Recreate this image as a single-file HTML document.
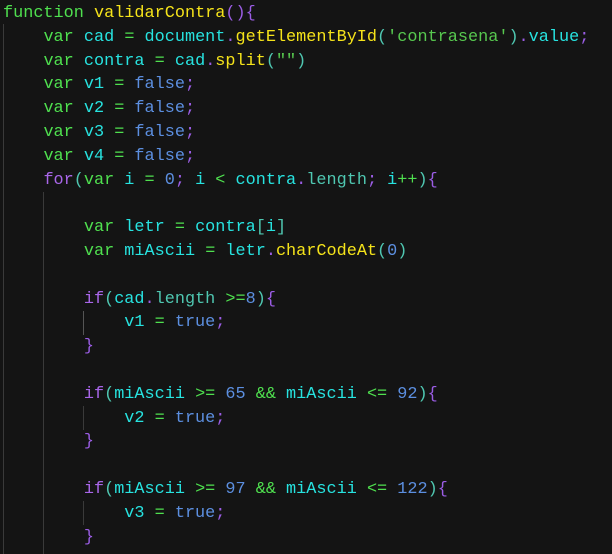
<!DOCTYPE html><html><head><style>
body{margin:0;background:#141414;width:612px;height:554px;overflow:hidden;position:relative}
pre{margin:0;position:absolute;left:3px;top:2px;font-family:"Liberation Mono",monospace;font-size:16.85px;line-height:23.8px;color:#27e3e0;white-space:pre}
.k{color:#4fe04f}.c{color:#a866e8}.f{color:#f5e31a}.b{color:#5c8fe0}.p{color:#9b5de5}.t{color:#4fc7b1}.s{color:#57c84f}.o{color:#4fe04f}
.g{position:absolute;width:1px;background:#3a3a3a}
</style></head><body>
<div class="g" style="left:3px;top:24px;height:530px"></div>
<div class="g" style="left:43px;top:192px;height:362px"></div>
<div class="g" style="left:83px;top:311px;height:24px;background:#555"></div>
<div class="g" style="left:83px;top:406px;height:24px"></div>
<div class="g" style="left:83px;top:501px;height:24px"></div>
<pre><span class="k">function</span> <span class="f">validarContra</span><span class="p">(){</span>
    <span class="k">var</span> cad <span class="o">=</span> document<span class="p">.</span><span class="f">getElementById</span><span class="t">(</span><span class="s">'contrasena'</span><span class="t">)</span><span class="p">.</span>value<span class="p">;</span>
    <span class="k">var</span> contra <span class="o">=</span> cad<span class="p">.</span><span class="f">split</span><span class="t">(</span><span class="s">""</span><span class="t">)</span>
    <span class="k">var</span> v1 <span class="o">=</span> <span class="b">false</span><span class="p">;</span>
    <span class="k">var</span> v2 <span class="o">=</span> <span class="b">false</span><span class="p">;</span>
    <span class="k">var</span> v3 <span class="o">=</span> <span class="b">false</span><span class="p">;</span>
    <span class="k">var</span> v4 <span class="o">=</span> <span class="b">false</span><span class="p">;</span>
    <span class="c">for</span><span class="t">(</span><span class="k">var</span> i <span class="o">=</span> <span class="b">0</span><span class="p">;</span> i <span class="o">&lt;</span> contra<span class="p">.</span><span class="t">length</span><span class="p">;</span> i<span class="o">++</span><span class="t">)</span><span class="p">{</span>

        <span class="k">var</span> letr <span class="o">=</span> contra<span class="t">[</span>i<span class="t">]</span>
        <span class="k">var</span> miAscii <span class="o">=</span> letr<span class="p">.</span><span class="f">charCodeAt</span><span class="t">(</span><span class="b">0</span><span class="t">)</span>

        <span class="c">if</span><span class="t">(</span>cad<span class="p">.</span><span class="t">length</span> <span class="o">&gt;=</span><span class="b">8</span><span class="t">)</span><span class="p">{</span>
            v1 <span class="o">=</span> <span class="b">true</span><span class="p">;</span>
        <span class="p">}</span>

        <span class="c">if</span><span class="t">(</span>miAscii <span class="o">&gt;=</span> <span class="b">65</span> <span class="o">&amp;&amp;</span> miAscii <span class="o">&lt;=</span> <span class="b">92</span><span class="t">)</span><span class="p">{</span>
            v2 <span class="o">=</span> <span class="b">true</span><span class="p">;</span>
        <span class="p">}</span>

        <span class="c">if</span><span class="t">(</span>miAscii <span class="o">&gt;=</span> <span class="b">97</span> <span class="o">&amp;&amp;</span> miAscii <span class="o">&lt;=</span> <span class="b">122</span><span class="t">)</span><span class="p">{</span>
            v3 <span class="o">=</span> <span class="b">true</span><span class="p">;</span>
        <span class="p">}</span>
</pre>
</body></html>
